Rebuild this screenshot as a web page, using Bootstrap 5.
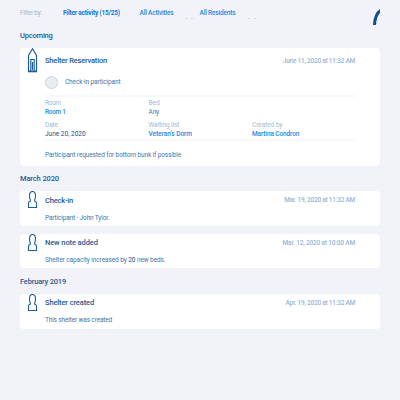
<!DOCTYPE html>
<html lang="en">
<head>
<meta charset="utf-8">
<meta name="viewport" content="width=device-width, initial-scale=1">
<title>Shelter activity</title>
<link href="https://cdn.jsdelivr.net/npm/bootstrap@5.3.0/dist/css/bootstrap.min.css" rel="stylesheet">
<style>
body{background:#f2f3f8;font-family:Roboto,"Liberation Sans",sans-serif;font-size:6.5px;line-height:8px;color:#4577a7;min-height:400px;overflow:hidden;white-space:nowrap}
.page{width:360px;margin:0 auto;padding-top:9px}
.filters{height:22px}
.filters .lbl{width:43px}
.filters .f1{width:76.5px}
.filters .f2{width:60px}
.filters a,.lnk{color:#2389e4;text-decoration:none;font-weight:500}
.filters .f1{color:#087be0;font-weight:700}
.muted{color:#9dbad6}
h2,h3{margin:0;color:#1f5a96;font-weight:500;font-size:7.5px;line-height:10px;letter-spacing:-.19px}
.entry{border:0;border-radius:4px;padding:0 25px;background:#fff}
.note{height:34.5px}
.note .head{padding-top:4px}
.note .body-line{margin-top:8px;letter-spacing:-.14px}
.head{padding-top:8px}
.when{color:#97b6d5;font-weight:500;line-height:10px;letter-spacing:-.24px}
.glyph{position:absolute;left:7px;top:0;fill:none;stroke:#1c5c98}
.dot{width:13px;height:13px;border:1px solid #ccd4db;background:#e8edf4}
.rule{height:2px;background:#f7f8fa}
.c1{width:103.5px}
.dark{color:#174f87}
.tight-1{letter-spacing:-.03px}
.tight-2{letter-spacing:-.11px}
.tight-3{letter-spacing:-.16px}
.tight-4{letter-spacing:-.2px}
.tight-5{letter-spacing:-.29px}
.arc{position:absolute;left:372px;top:8px}
.dash{position:absolute;top:17.5px;width:2px;height:1px;background:#d4dae1}
.dash-1{left:185px}.dash-2{left:191px}.dash-3{left:248px}.dash-4{left:254px}
</style>
</head>
<body>
<svg class="arc" width="8" height="17" viewBox="0 0 8 17"><path d="M2.5 17Q3 6 9 2.2" fill="none" stroke="#10508e" stroke-width="3"/></svg>
<i class="dash dash-1"></i><i class="dash dash-2"></i><i class="dash dash-3"></i><i class="dash dash-4"></i>
<svg class="d-none"><symbol id="person" viewBox="0 0 11 18"><path d="M1.5 16.5V12.2Q1.5 10.6 3.3 10.3V8.9Q2.5 7.6 2.5 4.8Q2.6 .5 5.5 .5T8.5 4.8Q8.5 7.6 7.7 8.9V10.3Q9.5 10.6 9.5 12.2V16.5Z" stroke-width="1.1"/></symbol></svg>
<main class="page">
<nav class="filters d-flex"><span class="lbl muted tight-5">Filter by:</span><a class="f1 tight-4" href="#">Filter activity (15/25)</a><a class="f2 tight-3" href="#">All Activities</a><a class="tight-3" href="#">All Residents</a></nav>
<h2>Upcoming</h2>
<article class="entry card" style="height:118px;margin-top:7px">
<svg class="glyph" width="11" height="25" viewBox="0 0 11 25"><path d="M1.5 24V7.5L5.5 .8 9.5 7.5V24M3.8 23V11.5H7.2V23M5.5 14V22" stroke-width="1.15"/><path d="M1 23.4H10" stroke-width="1.8"/></svg>
<div class="head d-flex justify-content-between"><h3>Shelter Reservation</h3><span class="when">June 11, 2020 at 11:32 AM</span></div>
<div class="d-flex align-items-center" style="margin-top:9.5px;gap:7px"><i class="dot rounded-circle"></i><span class="tight-2">Check-in participant</span></div>
<div class="rule" style="margin-top:6.5px"></div>
<div class="d-flex muted" style="margin-top:1.5px"><span class="c1 tight-5">Room</span><span class="tight-1">Bed</span></div>
<div class="d-flex" style="margin-top:1px"><span class="c1 lnk tight-5">Room 1</span><span class="tight-2">Any</span></div>
<div class="d-flex muted" style="margin-top:5px"><span class="c1 tight-2">Date</span><span class="c1 tight-2">Waiting list</span><span class="tight-1">Created by</span></div>
<div class="d-flex" style="margin-top:1px"><span class="c1 dark">June 20, 2020</span><span class="c1 lnk tight-1">Veteran's Dorm</span><span class="lnk tight-2">Martina Condron</span></div>
<div class="rule" style="margin-top:1px"></div>
<div style="margin-top:10px"><span class="tight-2">Participant requested for bottom bunk if possible</span></div>
</article>
<h2 style="margin-top:7.5px;letter-spacing:-.12px">March 2020</h2>
<article class="entry card note" style="margin-top:7.5px">
<svg class="glyph" width="11" height="18"><use href="#person"/></svg>
<div class="head d-flex justify-content-between"><h3 class="pt-0" style="line-height:11px">Check-in</h3><span class="when">Mar. 19, 2020 at 11:32 AM</span></div>
<div class="body-line">Participant - John Tylor.</div>
</article>
<article class="entry card note" style="margin-top:8px">
<svg class="glyph" width="11" height="18"><use href="#person"/></svg>
<div class="head d-flex justify-content-between"><h3 class="tight-2">New note added</h3><span class="when" style="letter-spacing:-.17px">Mar. 12, 2020 at 10:00 AM</span></div>
<div class="body-line" style="letter-spacing:-.087px">Shelter capacity increased by <span class="dark">20</span> new beds.</div>
</article>
<h2 style="margin-top:8.5px">February 2019</h2>
<article class="entry card note" style="margin-top:7.5px">
<svg class="glyph" width="11" height="18"><use href="#person"/></svg>
<div class="head d-flex justify-content-between"><h3 style="letter-spacing:-.13px">Shelter created</h3><span class="when">Apr. 19, 2020 at 11:32 AM</span></div>
<div class="body-line tight-2">This shelter was created</div>
</article>
</main>
<script src="https://cdn.jsdelivr.net/npm/bootstrap@5.3.0/dist/js/bootstrap.bundle.min.js"></script>
</body>
</html>
